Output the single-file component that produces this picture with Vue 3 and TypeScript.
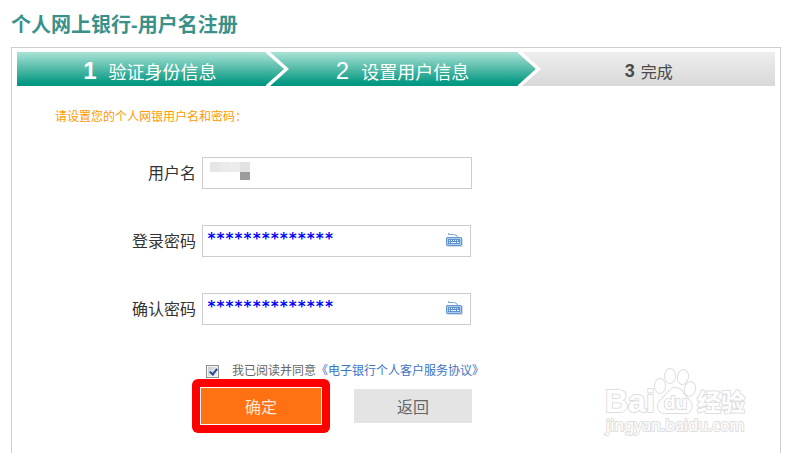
<script setup lang="ts">
import { ref } from 'vue'

interface Step {
  no: number
  label: string
  state: 'done' | 'current' | 'pending'
}

const steps: Step[] = [
  { no: 1, label: '验证身份信息', state: 'done' },
  { no: 2, label: '设置用户信息', state: 'current' },
  { no: 3, label: '完成', state: 'pending' },
]

const username = ref('')
const passwords = ref([
  { id: 'login-password', label: '登录密码', value: '*'.repeat(14) },
  { id: 'confirm-password', label: '确认密码', value: '*'.repeat(14) },
])
const agreed = ref(true)
</script>

<template>
  <main class="page">
    <h1 class="title">个人网上银行-用户名注册</h1>
    <section class="panel">
      <ol class="steps">
        <li v-for="step in steps" :key="step.no" class="step" :class="step.state">
          <span class="step-no">{{ step.no }}</span>
          <span class="step-label">{{ step.label }}</span>
          <svg v-if="step.state !== 'pending'" class="chevron" viewBox="0 0 24 34" aria-hidden="true">
            <defs>
              <linearGradient :id="`teal-${step.no}`" x1="0" y1="0" x2="0" y2="34" gradientUnits="userSpaceOnUse">
                <stop offset="0" stop-color="#a9e3d7" />
                <stop offset="0.5" stop-color="#52baa6" />
                <stop offset="0.9" stop-color="#079a84" />
                <stop offset="1" stop-color="#019680" />
              </linearGradient>
            </defs>
            <path d="M0 0L18 17L0 34Z" :fill="`url(#teal-${step.no})`" />
            <path d="M-1 0H4L23 17L4 34H-1L18 17Z" fill="#fff" />
          </svg>
        </li>
      </ol>

      <form class="form" @submit.prevent>
        <p class="hint">请设置您的个人网银用户名和密码：</p>

        <div class="row">
          <label for="username">用户名</label>
          <div class="field wide">
            <input id="username" v-model="username" type="text" autocomplete="off" />
            <svg class="mosaic" viewBox="0 0 40 18" shape-rendering="crispEdges" aria-hidden="true">
              <rect width="10" height="10" fill="#e6e6e6" />
              <rect x="10" width="10" height="10" fill="#eaeaea" />
              <rect x="20" width="10" height="10" fill="#ececec" />
              <rect x="30" width="10" height="10" fill="#e2e2e2" />
              <rect x="30" y="10" width="10" height="8" fill="#9c9d9b" />
            </svg>
          </div>
        </div>

        <div v-for="item in passwords" :key="item.id" class="row">
          <label :for="item.id">{{ item.label }}</label>
          <div class="field">
            <input :id="item.id" v-model="item.value" class="secret" type="text" autocomplete="off" />
            <button class="keyboard" type="button" aria-label="软键盘">
              <svg viewBox="0 0 18 16" aria-hidden="true">
                <path d="M3.5 1V2.5H8.5Q12 2.5 12.5 5" fill="none" stroke="#7da8d8" />
                <rect x="2" y="6" width="16" height="9" rx="1" fill="#d3dfee" />
                <path d="M2 5H16L17 6V13L16 14H2L1 13V6Z" fill="#6896cc" />
                <rect x="2" y="6" width="14" height="7" fill="#a9cdf0" />
                <rect x="3" y="7" width="12" height="5" fill="#5f92cd" />
                <path d="M4 8.5H14" stroke="#e8f3ff" stroke-dasharray="1 1" />
                <path d="M4 10.5H5M6 10.5H11M12 10.5H14" stroke="#e8f3ff" />
              </svg>
            </button>
          </div>
        </div>

        <div class="agreement">
          <input id="agree" v-model="agreed" type="checkbox" />
          <label for="agree">我已阅读并同意</label>
          <a href="#agreement">《电子银行个人客户服务协议》</a>
        </div>

        <div class="actions">
          <span class="highlight"><button class="confirm" type="submit">确定</button></span>
          <button class="back" type="button">返回</button>
        </div>
      </form>

      <svg class="watermark" viewBox="0 0 146 72" role="img">
        <g fill="#fff" stroke="#dedede" stroke-width="2" paint-order="stroke" stroke-linejoin="round">
          <text class="brand" x="0" y="45">Bai</text>
          <ellipse cx="55" cy="19" rx="5" ry="7" />
          <ellipse cx="65" cy="9" rx="5" ry="7" />
          <ellipse cx="78" cy="10" rx="5" ry="7" transform="rotate(10 78 10)" />
          <ellipse cx="85" cy="22" rx="5" ry="7" transform="rotate(12 85 22)" />
          <path d="M70 21C76 21 78 26 81 30C85 34 88 36 86 42C85 46 81 47 77 46H63C58 47 54 45 53 41C52 36 56 33 60 29C63 26 65 21 70 21Z" />
          <text class="du" x="59" y="42">du</text>
          <text class="jingyan" x="92" y="44">经验</text>
          <text class="site" x="1" y="64">jingyan.baidu.com</text>
        </g>
      </svg>
    </section>
  </main>
</template>

<style>
body {
  margin: 0;
  background: #fff;
}
</style>

<style scoped>
.page {
  display: flex;
  flex-direction: column;
  box-sizing: border-box;
  min-height: 100vh;
  padding: 11px 9px 0 11px;
  font-family: "Liberation Sans", "Noto Sans CJK SC", sans-serif;
  color: #333;
}

.title {
  margin: 0;
  font-size: 20px;
  line-height: 28px;
  color: #3a9189;
}

.panel {
  position: relative;
  flex: 1;
  margin-top: 8px;
  padding: 4px 5px 0;
  border: 1px solid #ccc;
  border-bottom: 0;
}

.steps {
  display: grid;
  grid-template-columns: repeat(3, 1fr);
  margin: 0;
  padding: 0;
  list-style: none;
}

.step {
  position: relative;
  display: flex;
  align-items: center;
  justify-content: center;
  height: 34px;
  gap: 12px;
  box-sizing: border-box;
  padding: 4px 0 0 13px;
  font-size: 18px;
  color: #fff;
  background: linear-gradient(#a9e3d7, #52baa6 50%, #079a84 90%, #019680);
}

.step-no {
  font-size: 24px;
}

.done .step-no {
  font-weight: 700;
}

.pending {
  gap: 6px;
  padding-left: 0;
  font-size: 16px;
  color: #4a4a4a;
  background: linear-gradient(#eee, #d8d8d8);
}

.pending .step-no {
  font-size: 18px;
  font-weight: 700;
}

.chevron {
  position: absolute;
  z-index: 1;
  top: 0;
  right: -20px;
  width: 24px;
  height: 34px;
}

.form {
  padding: 21px 0 0 38px;
}

.hint {
  margin: 0 0 30px;
  font-size: 12px;
  line-height: 20px;
  color: #f90;
}

.row {
  display: flex;
  align-items: center;
  gap: 6px;
  margin-bottom: 36px;
}

.row label {
  width: 141px;
  padding-bottom: 2px;
  font-size: 16px;
  text-align: right;
}

.field {
  position: relative;
  width: 269px;
}

.field.wide {
  width: 270px;
}

.field input {
  display: block;
  box-sizing: border-box;
  width: 100%;
  height: 32px;
  padding: 0 30px 0 4px;
  border: 1px solid #ccc;
  border-radius: 0;
  outline: 0;
  background: #fff;
  font-family: "Liberation Sans", "Noto Sans CJK SC", sans-serif;
  font-size: 15px;
}

.field .secret {
  padding-bottom: 4px;
  font-family: "DejaVu Sans Mono", monospace;
  font-weight: 700;
  color: #00f;
}

.mosaic {
  position: absolute;
  top: 5px;
  left: 8px;
  width: 40px;
  height: 18px;
}

.keyboard {
  position: absolute;
  top: 7px;
  right: 8px;
  padding: 0;
  border: 0;
  background: none;
  cursor: pointer;
}

.keyboard svg {
  display: block;
  width: 18px;
  height: 16px;
}

.agreement {
  display: flex;
  align-items: center;
  padding-left: 151px;
  font-size: 12px;
  line-height: 20px;
  color: #666;
}

.agreement input {
  appearance: none;
  box-sizing: border-box;
  width: 13px;
  height: 13px;
  margin: 0 13px 0 0;
  border: 1px solid #8e8f8f;
  box-shadow: inset 0 0 0 1px #f4f4f4;
  background: linear-gradient(135deg, #c5cbd3, #f4f5f6);
}

.agreement input:checked::after {
  content: "";
  display: block;
  width: 3px;
  height: 6px;
  margin: 1px 0 0 4px;
  border: solid #2a4a94;
  border-width: 0 2px 2px 0;
  transform: rotate(38deg);
}

.agreement a {
  color: #3a73c4;
  text-decoration: none;
}

.actions {
  display: flex;
  align-items: center;
  gap: 24px;
  margin-top: -2px;
  padding-left: 137px;
}

.actions button {
  padding: 0;
  border: 0;
  font-family: inherit;
  font-size: 16px;
  cursor: pointer;
}

.highlight {
  padding: 8px;
  border-radius: 6px;
  background: #f00;
}

.actions .confirm {
  display: block;
  width: 122px;
  height: 38px;
  border: 1px solid #fff;
  background: #ff7113;
  color: #ffe6d4;
}

.actions .back {
  width: 118px;
  height: 34px;
  background: #e4e4e4;
  color: #666;
}

.watermark {
  position: absolute;
  top: 319px;
  right: 29px;
  width: 146px;
  height: 72px;
  overflow: visible;
}

.brand {
  font-size: 32px;
  font-weight: 700;
}

.du {
  font-size: 19px;
  font-weight: 700;
}

.jingyan {
  font-size: 24px;
  font-weight: 700;
}

.site {
  font-family: "Noto Sans", sans-serif;
  font-size: 16px;
}
</style>
